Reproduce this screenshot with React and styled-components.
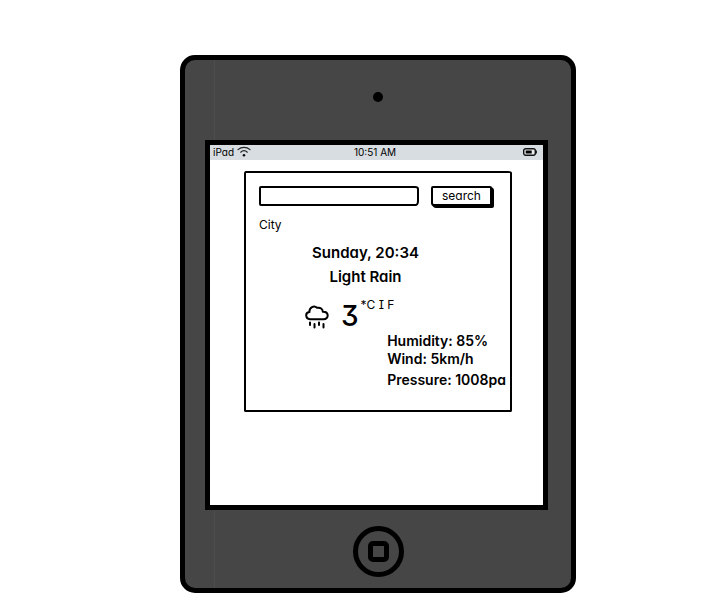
import React from 'react';
import styled, { createGlobalStyle } from 'styled-components';

const GlobalStyle = createGlobalStyle`
  *, *::before, *::after { box-sizing: border-box; }
  body {
    margin: 0;
    background: #fff;
    color: #000;
    font-family: Inter, "Liberation Sans", sans-serif;
    font-feature-settings: "cv11";
  }
`;

const Page = styled.main`
  padding: 55px 20px 0 180px;
`;

const Tablet = styled.div`
  display: flex;
  flex-direction: column;
  align-items: center;
  width: 100%;
  max-width: 396px;
  padding: 32px 23px 11px 20px;
  border: 5px solid #000;
  border-radius: 15px;
  background: linear-gradient(#4e4e4e, #4e4e4e) 29px 0 / 1px 100% no-repeat, #464646;
`;

const Camera = styled.div`
  width: 10px;
  height: 10px;
  margin-left: 3px;
  border-radius: 50%;
  background: #000;
`;

const Screen = styled.section`
  width: 100%;
  min-height: 370px;
  margin-top: 38px;
  border: 5px solid #000;
  background: #fff;
`;

const StatusBar = styled.header`
  display: grid;
  grid-template-columns: 1fr auto 1fr;
  align-items: center;
  height: 15px;
  padding: 0 6px 2px 3px;
  background: #d7dde1;
  font-size: 10px;
  line-height: 12px;
`;

const Carrier = styled.span`
  display: flex;
  align-items: center;
  gap: 3px;
`;

const Battery = styled.svg`
  justify-self: end;
`;

const Panel = styled.div`
  margin: 11px 31px 0 34px;
  min-height: 241px;
  padding: 13px 4px 18px 13px;
  border: 2px solid #000;
  border-radius: 2px 4px 1px 2px / 3px 2px 2px 1px;
`;

const SearchForm = styled.form`
  display: flex;
  align-items: center;
  gap: 12px;
  padding-right: 14px;
`;

const SearchInput = styled.input`
  flex: 1;
  min-width: 0;
  height: 20px;
  padding: 0 4px;
  border: 2px solid #000;
  border-radius: 2px 4px 3px 2px / 2px 3px 5px 2px;
  background: #fff;
  font: 12px Inter, sans-serif;
`;

const SearchButton = styled.button`
  width: 61px;
  height: 20px;
  padding: 0;
  border: 2px solid #000;
  border-radius: 2px 2px 2px 3px / 2px 2px 2px 3px;
  background: #fff;
  color: #000;
  box-shadow: 1px 1px 0 #000, 2px 2px 0 #000;
  font: 12px/16px Inter, sans-serif;
  font-feature-settings: "cv11";
`;

const City = styled.label`
  display: block;
  width: max-content;
  margin-top: 11px;
  font-size: 12px;
  line-height: 16px;
`;

const Summary = styled.div`
  margin: 8px 34px 0 0;
  text-align: center;
`;

const Headline = styled.h1`
  margin: 0;
  font-size: 15px;
  font-weight: 600;
  line-height: 24px;
`;

const Condition = styled.p`
  margin: 0;
  font-size: 15px;
  font-weight: 600;
  line-height: 24px;
`;

const Reading = styled.div`
  display: flex;
  align-items: flex-start;
  padding: 11px 0 0 46px;
`;

const RainIcon = styled.svg`
  margin-top: 5px;
`;

const Degrees = styled.strong`
  margin-left: 12px;
  font-size: 28px;
  font-weight: 500;
  line-height: 32px;
  font-feature-settings: "cv09";
`;

const Units = styled.span`
  margin-left: 2px;
  font-size: 12px;
  line-height: 10px;
  font-feature-settings: "cv08";
`;

const Details = styled.ul`
  width: max-content;
  margin: 0 0 0 auto;
  padding: 0;
  list-style: none;
  font-size: 14px;
  font-weight: 600;
  line-height: 18px;
`;

const DetailRow = styled.li`
  margin-top: ${(props) => (props.$spaced ? '3px' : '0')};
`;

const HomeButton = styled.button`
  display: grid;
  place-items: center;
  width: 51px;
  height: 51px;
  margin: 16px 0 0 3px;
  padding: 0;
  border: 5px solid #000;
  border-radius: 50%;
  background: transparent;

  &::before {
    content: "";
    width: 21px;
    height: 21px;
    border: 5px solid #000;
    border-radius: 5px;
  }
`;

export default function App() {
  return (
    <>
      <GlobalStyle />
      <Page>
        <Tablet>
          <Camera />
          <Screen>
            <StatusBar>
              <Carrier>
                iPad
                <svg width="14" height="11" viewBox="0 0 14 11" fill="none" stroke="#222" strokeLinecap="round" aria-hidden="true">
                  <path d="M1 3.600C4.500.500 9.500.500 13 3.600M3.700 6.200c2-1.800 4.600-1.800 6.600 0" strokeWidth="1.2" />
                  <circle cx="7" cy="9.300" r="1.300" fill="#111" stroke="none" />
                </svg>
              </Carrier>
              <time>10:51 AM</time>
              <Battery width="14" height="8" viewBox="0 0 14 8" aria-hidden="true">
                <rect x=".7" y=".7" width="11.6" height="6.6" rx="2" fill="#e8ecee" stroke="#111" strokeWidth="1.4" />
                <path d="M13.3 2.5v3" stroke="#111" strokeWidth="1.2" />
                <path d="M2.7 2.500h6v3h-6z" fill="#000" />
              </Battery>
            </StatusBar>
            <Panel>
              <SearchForm onSubmit={(event) => event.preventDefault()}>
                <SearchInput id="city" type="text" />
                <SearchButton type="submit">search</SearchButton>
              </SearchForm>
              <City htmlFor="city">City</City>
              <Summary>
                <Headline>Sunday, 20:34</Headline>
                <Condition>Light Rain</Condition>
              </Summary>
              <Reading>
                <RainIcon width="24" height="24" viewBox="0 0 24 24" fill="none" stroke="#000" strokeWidth="2" strokeLinecap="round" strokeLinejoin="round" aria-hidden="true">
                  <path d="M5 14.2C.3 13.9-.2 7.7 4.4 7.1 4.2 2.4 9-.1 12 2.8c3.5-.7 5.700 1.100 5.800 4 6.300-.2 6.500 7.200.7 7.400Z" />
                  <path d="M5 17.500v2.500M9.500 19v3.500M14 17.500v2.500M18.500 19v3.500" />
                </RainIcon>
                <Degrees>3</Degrees>
                <Units>*C I F</Units>
              </Reading>
              <Details>
                <DetailRow>Humidity: 85%</DetailRow>
                <DetailRow>Wind: 5km/h</DetailRow>
                <DetailRow $spaced>Pressure: 1008pa</DetailRow>
              </Details>
            </Panel>
          </Screen>
          <HomeButton type="button" aria-label="Home" />
        </Tablet>
      </Page>
    </>
  );
}
